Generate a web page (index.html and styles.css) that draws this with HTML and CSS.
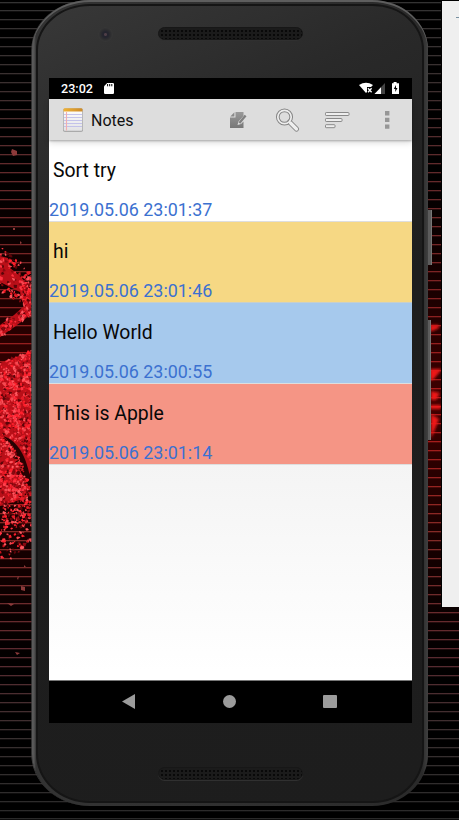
FILE: index.html
```html
<!DOCTYPE html>
<html lang="en">
<head>
<meta charset="utf-8">
<title>Notes</title>
<link rel="stylesheet" href="styles.css">
</head>
<body>
<svg class="wallpaper" width="459" height="820" viewBox="0 0 459 820" aria-hidden="true">
  <defs>
    <linearGradient id="lines" x1="0" y1="0" x2="0" y2="820" gradientUnits="userSpaceOnUse">
      <stop offset="0" stop-color="#333"/><stop offset=".1" stop-color="#3a3030"/>
      <stop offset=".2" stop-color="#602a2c"/><stop offset=".36" stop-color="#822222"/>
      <stop offset=".5" stop-color="#b01818"/><stop offset=".65" stop-color="#852a26"/>
      <stop offset=".8" stop-color="#5a2a30"/><stop offset=".9" stop-color="#383030"/>
      <stop offset="1" stop-color="#2a2a2a"/>
    </linearGradient>
    <linearGradient id="glow" x1="0" y1="170" x2="0" y2="680" gradientUnits="userSpaceOnUse">
      <stop offset="0" stop-color="#200" stop-opacity="0"/><stop offset=".45" stop-color="#400000"/>
      <stop offset="1" stop-color="#200" stop-opacity="0"/>
    </linearGradient>
    <filter id="soft"><feGaussianBlur stdDeviation="1.6"/></filter>
  </defs>
  <rect width="459" height="820" fill="#000"/>
  <rect y="170" width="459" height="510" fill="url(#glow)"/>
  <g id="stripes" fill="url(#lines)"></g>
  <g fill="#b90f18">
    <path d="M0 256L8 258L10 268L20 276L27 284L31 291V313L24 320L0 337V325L14 315L24 306L20 292L0 282Z"/>
    <path d="M0 363L16 357L31 352V470L27 480C24 460 14 445 2 436L12 455L25 480L27 492L20 500L0 506Z"/>
  </g>
  <path d="M3 436C17 440 27 456 31 482L26 486C24 462 16 448 3 436Z" fill="#260303"/>
  <g id="chips"></g>
  <g fill="#8c3a3a">
    <path d="M12 149l5 2l0 4l-4 1l-2-4z"/><path d="M21 586l4 1l0 4l-4-1zM7 603l7 1l-3 2zM15 652l5 1l-3 2z"/>
    <path d="M13 228h2v2h-2zM20 241l2 2l-2 1zM24 565l2 2l-2 0zM17 578l2-2l-1 4z"/>
  </g>
  <g fill="#f01515" filter="url(#soft)">
    <path d="M430 325h9v3l-9 4zM430 369h12l-9 11h-3zM431 391l9 2l-4 7h-5zM430 405h11v4h-11zM431 414l8 5l-8 20z"/>
  </g>
  <path d="M441.500 0v608" stroke="#000"/>
</svg>

<main class="phone">
  <i class="key power"></i><i class="key volume"></i>
  <div class="face">
    <header class="forehead">
      <i class="lens"></i><i class="speaker"></i>
    </header>
    <section class="screen">
      <div class="status">
        <span class="clock">23:02</span>
        <svg width="10" height="11" viewBox="0 0 10 11"><path d="M3.2 0H9.2L10 .8V10.2L9.2 11H.8L0 10.2V3.2Z" fill="#fff"/><path d="M3.6 1v2.3M5.7 1v2.3M7.8 1v2.3" stroke="#000" stroke-width="1"/></svg>
        <svg class="signals" width="41" height="13" viewBox="0 0 41 13">
          <path d="M0 3Q7-1.6 14 3L12 5H8V10L7 11Z" fill="#fff"/>
          <path d="M9 6.2l3.6 4M12.6 6.2l-3.6 4" stroke="#fff" stroke-width="1.3"/>
          <path d="M26 1V12H15.5Z" fill="#444"/><path d="M22 5.2V12H15.5Z" fill="#fff"/>
          <path d="M34.6 0h3v1.3H40V12H33V1.3h1.6z" fill="#fff"/><path d="M37 3l-2.2 4h1.5v3l2.2-4H37z" fill="#000"/>
        </svg>
      </div>
      <nav class="toolbar">
        <svg class="app" width="22" height="26" viewBox="0 0 22 26">
          <defs><linearGradient id="pad" x2="0" y2="1"><stop stop-color="#fff"/><stop offset="1" stop-color="#e2e2e4"/></linearGradient>
          <linearGradient id="band"><stop stop-color="#f0b234"/><stop offset="1" stop-color="#cc8b2a"/></linearGradient></defs>
          <rect x="1" y="1.5" width="20" height="23.5" rx="1.8" fill="#aaa"/>
          <rect x="1.8" y="2" width="18.4" height="21.8" rx="1" fill="url(#pad)"/>
          <path d="M1.5 4.5V2.5Q1.500 1.200 3 1.200H19Q20.500 1.200 20.500 2.500V4.500Z" fill="url(#band)"/>
          <path d="M2 7.500H20M2 10.500H20M2 13.500H20M2 16.500H20M2 19.500H20" stroke="#b9b8e8" stroke-width=".8"/>
          <path d="M4.500 5V23.500" stroke="#f2aeb0" stroke-width="1.100"/>
        </svg>
        <h1>Notes</h1>
        <svg class="actions" width="165" height="28" viewBox="0 0 165 28">
          <defs><linearGradient id="doc" x2="0" y2="1"><stop stop-color="#999"/><stop offset="1" stop-color="#777"/></linearGradient></defs>
          <path d="M6.500 6H14.500V10L9.500 15.500L8.500 19L12 18L14.500 15.500V22H1V11.500H6.500Z" fill="url(#doc)"/>
          <path d="M5.400 6.300V10.400H1.300Z" fill="#8a8a8a"/>
          <path d="M10.400 16.900L16.600 9.400" stroke="#808080" stroke-width="2.300"/>
          <g fill="none"><circle cx="55.500" cy="11" r="6.700" stroke="#858585" stroke-width="3.700"/><path d="M60.500 16L67.500 23" stroke="#858585" stroke-width="5.200" stroke-linecap="round"/>
          <circle cx="55.500" cy="11" r="6.700" stroke="#eee" stroke-width="1.700"/><path d="M61.500 17L67.500 23" stroke="#eee" stroke-width="3.200" stroke-linecap="round"/></g>
          <g fill="#eee" stroke="#898989"><rect x="96.500" y="6.500" width="23.500" height="3" rx=".7"/><rect x="96.500" y="12.500" width="16.500" height="3" rx=".7"/><rect x="96.500" y="18.700" width="9.500" height="3" rx=".7"/></g>
          <path d="M156 5h4.400v4.400H156zM156 11.700h4.400v4.400H156zM156 18.400h4.400v4.400H156z" fill="#969696"/>
        </svg>
      </nav>
      <ul class="notes">
        <li class="note white"><h2>Sort try</h2><time>2019.05.06 23:01:37</time></li>
        <li class="note yellow"><h2>hi</h2><time>2019.05.06 23:01:46</time></li>
        <li class="note blue"><h2>Hello World</h2><time>2019.05.06 23:00:55</time></li>
        <li class="note red"><h2>This is Apple</h2><time>2019.05.06 23:01:14</time></li>
      </ul>
      <div class="navkeys">
        <svg width="13" height="15" viewBox="0 0 13 15"><path d="M0 7.500L13 0V15Z"/></svg>
        <svg width="13" height="13" viewBox="0 0 13 13"><circle cx="6.500" cy="6.500" r="6.500"/></svg>
        <svg width="14" height="13" viewBox="0 0 14 13"><rect width="14" height="13" rx="1"/></svg>
      </div>
    </section>
    <footer class="chin"><i class="speaker"></i></footer>
  </div>
</main>
<aside class="panel"><i></i></aside>
<script src="wallpaper.js"></script>
</body>
</html>
```
FILE: styles.css
```css
* { box-sizing: border-box; }
body { margin: 0; width: 459px; height: 820px; overflow: hidden; background: #000; position: relative; font-family: Roboto, "Liberation Sans", sans-serif; }
svg { display: block; flex: none; }
h1, h2, ul { margin: 0; padding: 0; font-weight: 400; }
.wallpaper { position: absolute; inset: 0; }
.phone { position: relative; width: 396px; height: 806px; margin-left: 32px; padding: 4px 4px 3px 4px; border-radius: 58px 56px 56px 58px / 50px 50px 52px 52px; background: linear-gradient(90deg, #5c5c5c 0, #555 2px, #333 4px, #303030 50%, #2a2a2a 390px, #404040 396px); box-shadow: inset 0 2px 0 #5e5e5e, -1px 0 0 -0.3px #444; }
.face { height: 100%; border-radius: 54px 51px 51px 54px / 46px 46px 49px 49px; background: linear-gradient(155deg, #383838, #292929 20%, #1e1e1e 45%, #1d1d1d); border: 2px solid #151515; padding-left: 11px; display: flex; flex-direction: column; }
.forehead { height: 72px; flex: none; position: relative; padding: 21px 0 0 49px; display: flex; gap: 45px; }
.lens { width: 15px; height: 15px; border-radius: 50%; background: radial-gradient(circle, #4d3d46 0 1px, #24242e 2px 3px, #2d2d2f 5px, #363636 7px, transparent 7.5px); }
.speaker { display: block; width: 145px; height: 13px; border-radius: 7px; background: radial-gradient(circle, #090909 0 .8px, transparent 1.2px) 1px 1px / 4px 4px, #1b1b1b; border: 1px solid #171717; box-shadow: 0 1px 0 #303030; }
.screen { width: 363px; height: 645px; flex: none; background: linear-gradient(#f2f2f2, #f4f4f4 60%, #fff 92%); display: flex; flex-direction: column; }
.status { height: 21px; background: #000; color: #fff; display: flex; align-items: center; padding: 0 12px 0 12px; }
.clock { font-size: 12.6px; font-weight: 500; width: 43px; }
.signals { margin-left: auto; }
.toolbar { height: 41px; flex: none; background: #ddd; display: flex; align-items: center; padding: 0 18px 0 13px; position: relative; z-index: 1; box-shadow: 0 1px 2px #0004, 0 3px 6px #0002; }
.toolbar h1 { font-size: 16px; line-height: 20px; margin-left: 7px; color: #111; padding-top: 3px; }
.actions { margin-left: auto; }
.notes { list-style: none; flex: 1; }
.note { height: 81px; border-bottom: 1px solid #dedede; padding-top: 18px; }
.note h2 { font-size: 19.4px; line-height: 24px; padding-left: 4px; color: #080808; }
.note time { display: block; font-size: 17.9px; line-height: 22px; margin-top: 16px; color: #3c71d0; }
.white { background: #fff; height: 82px; padding-top: 19px; }
.yellow { background: #f6d884; border-color: #c8cfcb; }
.blue { background: #a6c9ed; }
.red { background: #f59585; }
.navkeys { height: 43px; border-top: 1px solid #777; background: #000; display: flex; align-items: center; justify-content: space-between; padding: 0 75px 2px 73px; }
.navkeys svg { fill: #9b9b9b; }
.chin { padding: 44px 0 0 109px; }
.key { position: absolute; left: 396px; background: #5c5c5c; border-right: 1px solid #777; }
.power { top: 210px; width: 4px; height: 55px; }
.volume { top: 320px; width: 3px; height: 120px; }
.panel { position: absolute; left: 442px; top: 1px; width: 17px; height: 606px; background: #efefef; padding: 16px 0 0 14px; }
.panel i { display: block; height: 1px; background: #7890a0; }
```
FILE: wallpaper.js
```js
const NS = "http://www.w3.org/2000/svg";
const stripes = document.getElementById("stripes");
for (let i = 0; i < 92; i++) {
  const r = document.createElementNS(NS, "rect");
  r.setAttribute("y", Math.round(1.5 + i * 8.978));
  r.setAttribute("width", 459);
  r.setAttribute("height", 1.3);
  stripes.appendChild(r);
}

// Seeded generator keeps the splatter identical on every load.
let seed = 17;
const rand = () => (seed = (seed * 16807) % 2147483647) / 2147483647;
const tones = ["#ff3140", "#e51c27", "#c5121b", "#880910", "#f44951", "#5a0509", "#ff202c", "#ff5860"];
const chips = document.getElementById("chips");
function chip(x, y, s) {
  const p = document.createElementNS(NS, "polygon");
  const pts = [];
  for (let k = 0; k < 5; k++) {
    const a = k * 1.257 + rand();
    const d = s * (0.5 + rand() * 0.7);
    pts.push((x + Math.cos(a) * d).toFixed(1) + "," + (y + Math.sin(a) * d).toFixed(1));
  }
  p.setAttribute("points", pts.join(" "));
  p.setAttribute("fill", tones[Math.floor(rand() * tones.length)]);
  chips.appendChild(p);
}
for (let i = 0; i < 2400; i++) {
  const x = rand() * 32;
  const y = 243 + rand() * 325;
  const upper = y > 246 + x * 0.8 && y < 294 + x * 0.4;
  const arm = x > 20 ? y > 280 && y < 322 - (x - 20) * 0.6 : y > 326 - x * 0.8 && y < 338 - x * 0.8;
  const lower = y > 364 - x * 0.45 && y < 569 - x * 0.85;
  const t = x - 3;
  const gap = t > 0 && y > 436 + t * t * 0.035 && y < 440 + t * t * 0.065;
  const keep = y > 495 ? 0.75 - (y - 495) / 110 : upper && !arm ? 0.35 : 1;
  if ((upper || arm || lower) && !gap && rand() < keep) chip(x, y, 0.8 + rand() * 1.6);
}
```
